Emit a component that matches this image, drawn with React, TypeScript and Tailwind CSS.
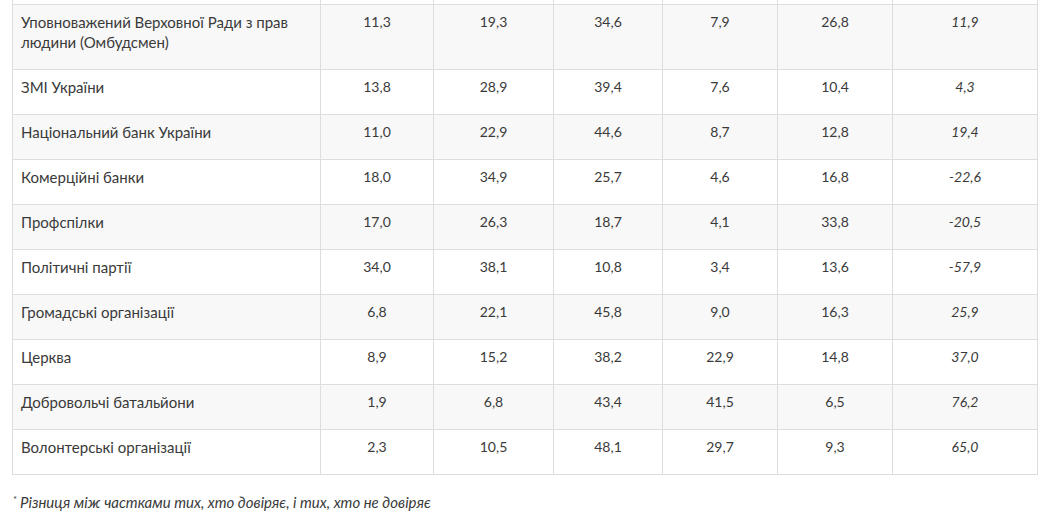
import React from "react";

const rows: [string, string, string, string, string, string, string][] = [
  ["Уповноважений Верховної Ради з прав людини (Омбудсмен)", "11,3", "19,3", "34,6", "7,9", "26,8", "11,9"],
  ["ЗМІ України", "13,8", "28,9", "39,4", "7,6", "10,4", "4,3"],
  ["Національний банк України", "11,0", "22,9", "44,6", "8,7", "12,8", "19,4"],
  ["Комерційні банки", "18,0", "34,9", "25,7", "4,6", "16,8", "-22,6"],
  ["Профспілки", "17,0", "26,3", "18,7", "4,1", "33,8", "-20,5"],
  ["Політичні партії", "34,0", "38,1", "10,8", "3,4", "13,6", "-57,9"],
  ["Громадські організації", "6,8", "22,1", "45,8", "9,0", "16,3", "25,9"],
  ["Церква", "8,9", "15,2", "38,2", "22,9", "14,8", "37,0"],
  ["Добровольчі батальйони", "1,9", "6,8", "43,4", "41,5", "6,5", "76,2"],
  ["Волонтерські організації", "2,3", "10,5", "48,1", "29,7", "9,3", "65,0"],
];

const widths = ["w-[308px]", "w-[113px]", "w-[120px]", "w-[109px]", "w-[115px]", "w-[115px]", "w-[145px]"];

export default function App() {
  return (
    <div className="w-[1058px] h-[529px] bg-white overflow-hidden text-[#3a3a3a] [font-family:Lato,'Open_Sans',sans-serif] text-[14px]">
      <div className="pl-[12px]">
        <table className="table-fixed border-collapse w-[1026px]">
          <colgroup>
            {widths.map((w, i) => (
              <col key={i} className={w} />
            ))}
          </colgroup>
          <tbody>
            <tr className="h-[4px]">
              {widths.map((_, i) => (
                <td key={i} className="border-x border-b border-[#dddddd] p-0 h-[4px]" />
              ))}
            </tr>
            {rows.map((r, ri) => (
              <tr key={ri} className={ri % 2 === 0 ? "bg-[#f8f8f8]" : "bg-white"}>
                {r.map((c, ci) => (
                  <td
                    key={ci}
                    className={
                      "border border-[#dddddd] align-top pt-[7px] pb-[17px] leading-[20px] px-[8px] " +
                      (ci === 0 ? "text-left text-[15px]" : ci === 6 ? "text-center italic text-[14px]" : "text-center text-[14px]")
                    }
                  >
                    {c}
                  </td>
                ))}
              </tr>
            ))}
          </tbody>
        </table>
      </div>
      <p className="pl-[13px] mt-[16px] italic leading-[22px] text-[15px] text-[#3a3a3a]">
        <sup className="text-[9px]">*</sup> Різниця між частками тих, хто довіряє, і тих, хто не довіряє
      </p>
    </div>
  );
}
